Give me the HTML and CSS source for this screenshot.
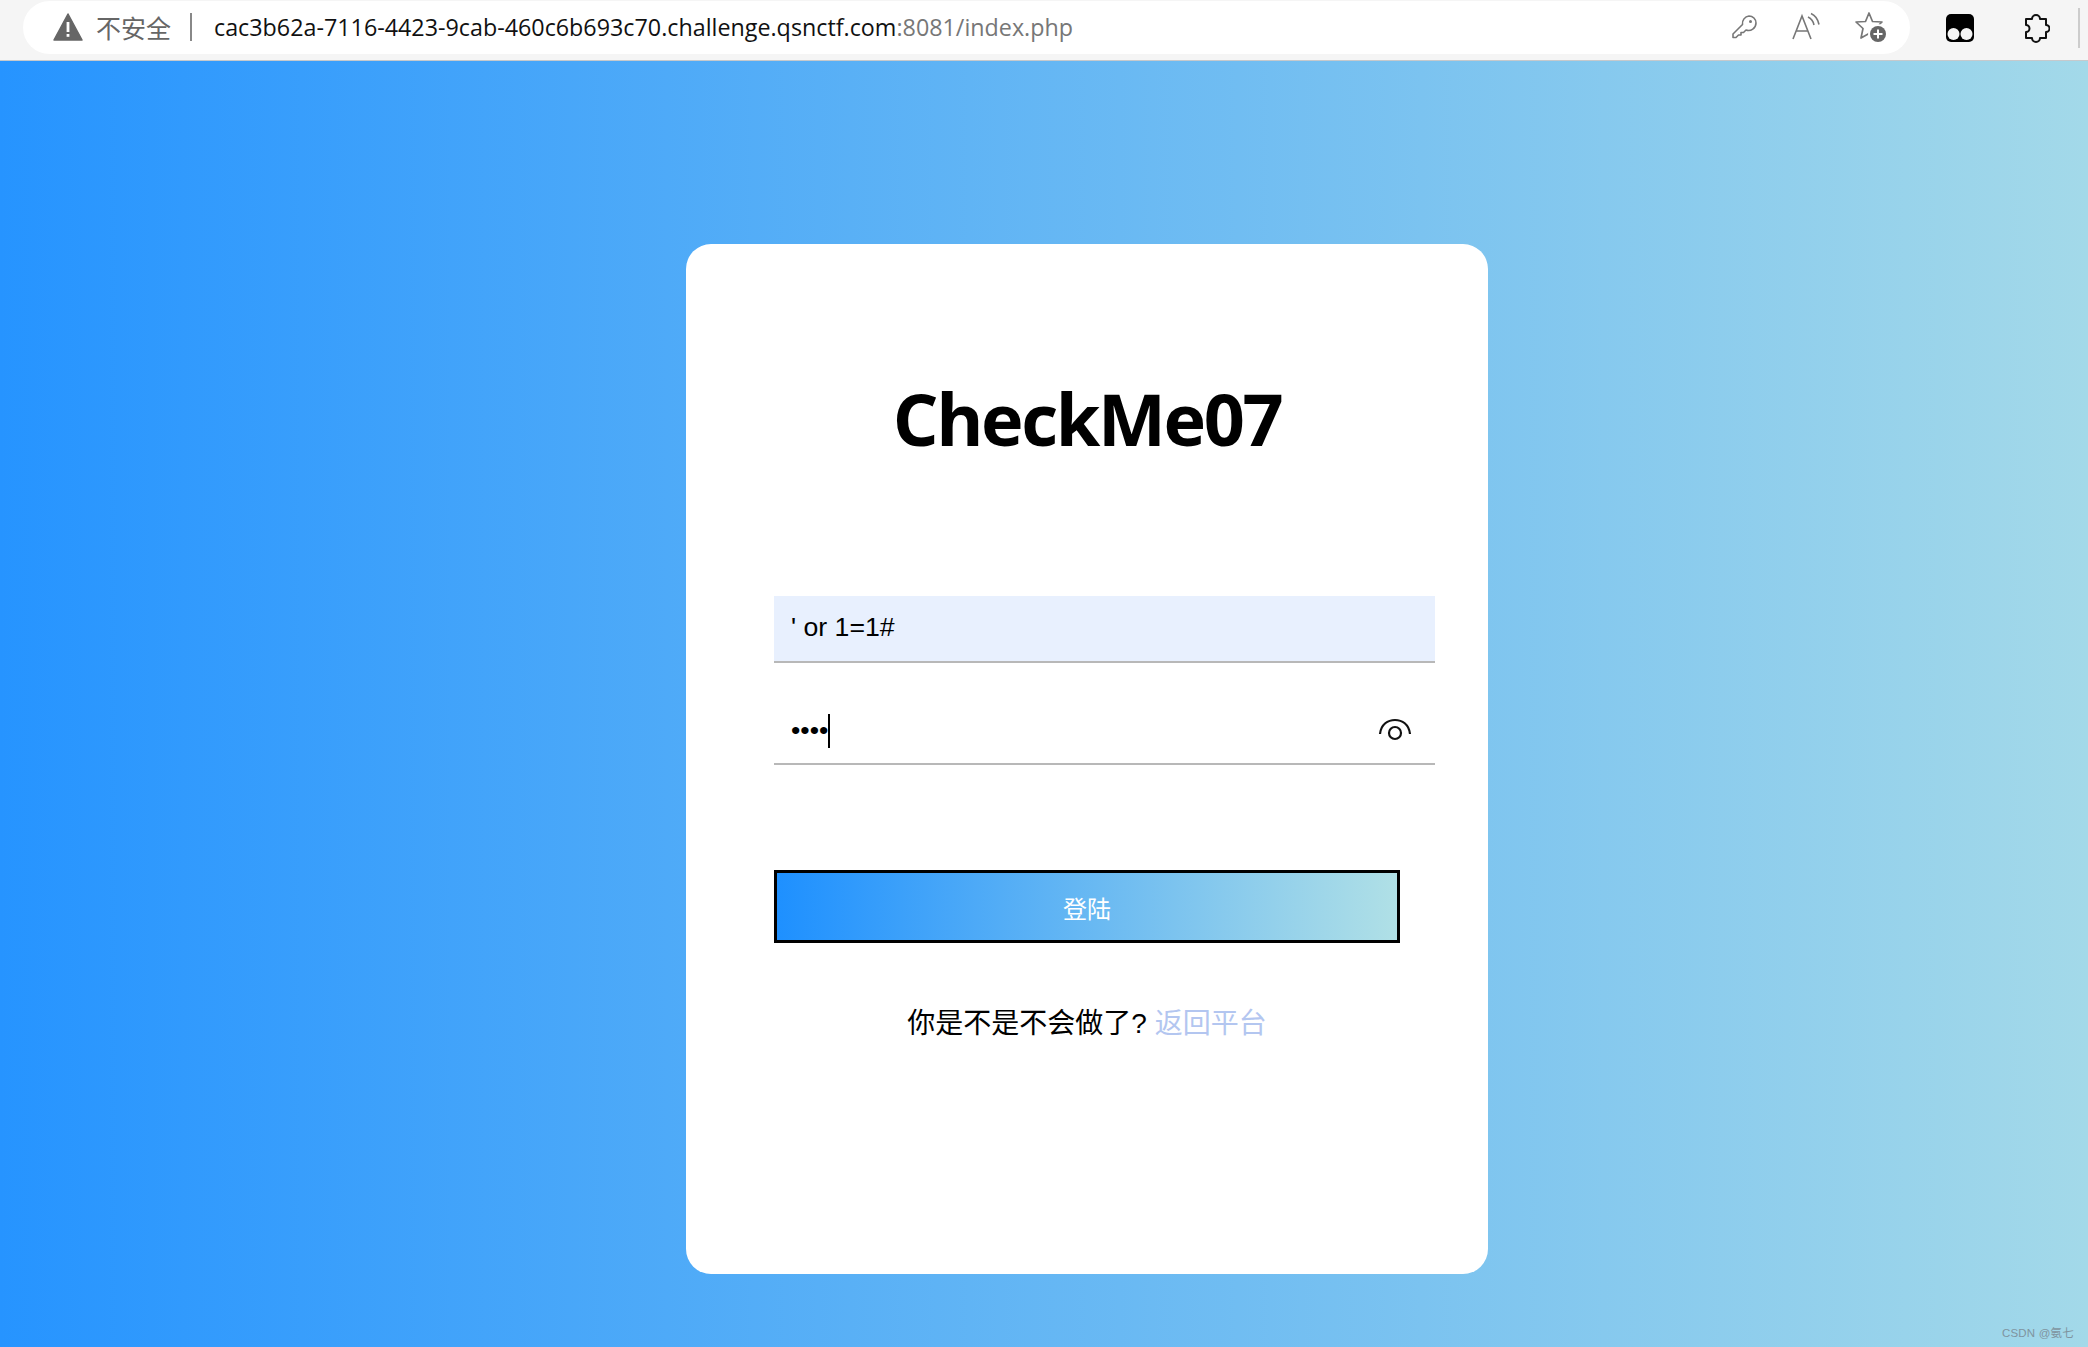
FILE: index.html
```html
<!DOCTYPE html>
<html lang="en">
  <head>
    <meta charset="UTF-8" />
    <meta name="viewport" content="width=device-width, initial-scale=1.0" />
    <title>CheckMe07</title>
    <link rel="stylesheet" href="styles.css">
  </head>
  <body>
    <div class="toolbar">
      <div class="address">
        <svg class="warn" width="30" height="28" viewBox="0 0 30 28">
          <path d="M15 1 L29 27 H1 Z" fill="#666" stroke="#666" stroke-width="1.5" stroke-linejoin="round"/>
          <rect x="13.600" y="9" width="2.800" height="10" fill="#fff"/>
          <rect x="13.600" y="21" width="2.800" height="2.800" fill="#fff"/>
        </svg>
        <span class="insecure">不安全</span>
        <span class="divider"></span>
        <span class="url">cac3b62a-7116-4423-9cab-460c6b693c70.challenge.qsnctf.com<span class="url-rest">:8081/index.php</span></span>
        <div class="address-icons">
          <svg width="26" height="28" viewBox="0 0 26 28" fill="none" stroke="#777" stroke-width="1.6" stroke-linejoin="round">
            <path d="M17 3 a7 7 0 0 1 7 7 a7.500 7.500 0 0 1 -10 7 l-2.500 2.500 h-2.500 v2.500 h-2.500 l-2.500 2.500 h-3 v-3.500 l9.500 -9.500 a7.500 7.500 0 0 1 6.500 -8.500 Z"/>
            <circle cx="18.500" cy="8.500" r="1.500" fill="#777" stroke="none"/>
          </svg>
          <svg width="30" height="30" viewBox="0 0 30 30" fill="none" stroke="#777" stroke-width="1.6">
            <path d="M2 27 L11 4 L20 27 M5.500 19 H16.500"/>
            <path d="M17 5 q5 2.500 6 8 M20 1.500 q6.500 3 8 11"/>
          </svg>
          <svg width="34" height="32" viewBox="0 0 34 32">
            <path d="M15 2 L18.500 10.500 L28 11 L21 17.500 L23 27 L15 22.500 L7 27 L9 17.500 L2 11 L11.500 10.500 Z" fill="none" stroke="#777" stroke-width="1.7" stroke-linejoin="round"/>
            <circle cx="24" cy="23" r="10" fill="#fff"/>
            <circle cx="24" cy="23" r="8" fill="#666"/>
            <path d="M24 18.500 V27.500 M19.500 23 H28.500" stroke="#fff" stroke-width="2"/>
          </svg>
        </div>
      </div>
      <svg class="tamper" width="30" height="30" viewBox="0 0 30 30">
        <rect x="1" y="1" width="28" height="28" rx="5" fill="#000"/>
        <circle cx="8.500" cy="21" r="6" fill="#f5f5f5"/>
        <circle cx="21.500" cy="21" r="6" fill="#f5f5f5"/>
      </svg>
      <svg class="puzzle" width="28" height="30" viewBox="0 0 28 30" fill="none" stroke="#111" stroke-width="2" stroke-linejoin="round">
        <path d="M10 6 a4 4 0 1 1 8 0 h6 v6 a3.500 3.500 0 0 1 0 7 v6 h-6 a4 4 0 0 1 -8 0 h-6 v-6 a3.500 3.500 0 0 0 0 -7 v-6 Z"/>
      </svg>
      <span class="toolbar-line"></span>
    </div>

    <div class="page">
      <div class="card">
        <h1>CheckMe07</h1>
        <form class="login">
          <input class="field filled" type="text" value="' or 1=1#" />
          <div class="password-group">
            <input class="field" type="password" value="1234" />
            <span class="caret"></span>
            <svg class="eye" width="36" height="24" viewBox="0 0 36 24" fill="none" stroke="#111" stroke-width="2.200">
              <path d="M3 16 C4 6 11 2 18 2 C25 2 32 6 33 16"/>
              <circle cx="18" cy="15" r="6"/>
            </svg>
          </div>
          <button type="button">登陆</button>
        </form>
        <p class="back">你是不是不会做了? <a href="#">返回平台</a></p>
      </div>
    </div>

    <div class="watermark">CSDN @氨七</div>
  </body>
</html>
```

FILE: styles.css
```css
* {
  box-sizing: border-box;
}

body {
  margin: 0;
  height: 1347px;
  overflow: hidden;
  display: flex;
  flex-direction: column;
  font-family: 'Liberation Sans', 'Noto Sans CJK SC', sans-serif;
}

.toolbar {
  height: 61px;
  background-color: #f5f5f5;
  border-bottom: 1px solid #c6c9cc;
  display: flex;
  align-items: center;
  padding: 1px 8px 6px 23px;
}

.address {
  width: 1887px;
  height: 53px;
  background-color: #fff;
  border-radius: 27px;
  display: flex;
  align-items: center;
  padding: 0 0 2px 30px;
  font-family: 'Open Sans', 'Noto Sans CJK SC', sans-serif;
  font-size: 23.3px;
}

.warn {
  margin-right: 13px;
}

.insecure {
  color: #666;
  font-family: 'Noto Sans CJK SC', sans-serif;
  font-size: 25px;
}

.divider {
  width: 2px;
  height: 28px;
  background-color: #888;
  margin: 0 22px 0 19px;
}

.url {
  color: #111;
  white-space: nowrap;
}

.url-rest {
  color: #777;
}

.address-icons {
  margin-left: auto;
  margin-right: 22px;
  display: flex;
  align-items: center;
  gap: 33px;
}

.tamper {
  margin-left: 35px;
}

.puzzle {
  margin-left: 47px;
}

.toolbar-line {
  width: 2px;
  height: 40px;
  background-color: #ccc;
  margin-left: 28px;
}

.page {
  flex: 1;
  background: linear-gradient(90deg, #2694ff, #a3d9e9);
  padding: 183px 0 0 686px;
}

.card {
  width: 802px;
  height: 1030px;
  background-color: #fff;
  border-radius: 25px;
  padding: 124px 88px 0;
}

h1 {
  margin: 0 0 128px;
  height: 100px;
  line-height: 100px;
  text-align: center;
  font-family: 'Open Sans', sans-serif;
  font-size: 72px;
  font-weight: 700;
  letter-spacing: -2.4px;
  color: #000;
}

.login {
  display: flex;
  flex-direction: column;
}

.field {
  width: 661px;
  height: 66px;
  border: none;
  border-bottom: 2px solid #b8b8b8;
  outline: none;
  padding: 0 17px 2px;
  background-color: #fff;
  font-family: 'Liberation Sans', sans-serif;
  font-size: 26.67px;
  color: #000;
}

.filled {
  height: 67px;
  background-color: #e8f0fe;
}

.password-group {
  position: relative;
  width: 661px;
  margin-top: 36px;
}

.password-group .field {
  display: block;
}

.caret {
  position: absolute;
  left: 54px;
  top: 15px;
  width: 2px;
  height: 34px;
  background-color: #000;
}

.eye {
  position: absolute;
  right: 22px;
  top: 19px;
}

button {
  height: 73px;
  margin-top: 105px;
  padding-top: 3px;
  border: 3px solid #000;
  background: linear-gradient(90deg, #1e90ff, #b0e0e6);
  color: #fff;
  font-family: 'Noto Sans CJK SC', sans-serif;
  font-size: 24px;
  cursor: pointer;
}

.back {
  margin: 61px 0 0;
  text-align: center;
  font-size: 28px;
  line-height: 40px;
  color: #000;
}

.back a {
  color: #b3c6f0;
  text-decoration: none;
}

.watermark {
  position: absolute;
  right: 14px;
  bottom: 7px;
  font-size: 11.5px;
  letter-spacing: 0.2px;
  color: #7f949f;
}
```
